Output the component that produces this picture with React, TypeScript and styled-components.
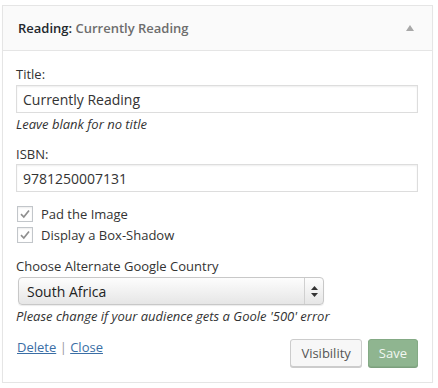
import React from "react";
import styled, { createGlobalStyle } from "styled-components";

const Global = createGlobalStyle`
  html, body { margin: 0; padding: 0; background: #fff; }
  body { font-family: "Open Sans", "Noto Sans", sans-serif; color: #444; font-size: 13px; }
  * { box-sizing: border-box; }
`;

const Widget = styled.div`
  margin: 5px 0 0 2px;
  width: 431px;
  border: 1px solid #e5e5e5;
  background: #fff;
  box-shadow: 0 1px 1px rgba(0, 0, 0, 0.04);
`;

const Header = styled.div`
  height: 45px;
  background: #fafafa;
  border-bottom: 1px solid #e5e5e5;
  padding: 0 18px 0 15px;
  display: flex;
  align-items: center;
  justify-content: space-between;
`;

const HeaderTitle = styled.div`
  font-size: 13px;
  font-weight: 600;
  color: #23282d;
`;

const HeaderSub = styled.span`
  color: #6d6d6d;
`;

const Toggle = styled.span`
  width: 0;
  height: 0;
  border-left: 4px solid transparent;
  border-right: 4px solid transparent;
  border-bottom: 6px solid #a8a8a8;
`;

const Body = styled.div`
  padding: 14px 14px 15px 13px;
  display: flex;
  flex-direction: column;
`;

const Label = styled.label<{ $gap?: number }>`
  display: block;
  line-height: 18px;
  font-size: 13px;
  color: #333;
  margin-top: ${(p) => p.$gap ?? 0}px;
`;

const TextInput = styled.div<{ $gap?: number }>`
  margin-top: ${(p) => p.$gap ?? 2}px;
  height: 28px;
  border: 1px solid #ddd;
  box-shadow: inset 0 1px 2px rgba(0, 0, 0, 0.07);
  padding: 0 6px;
  display: flex;
  align-items: center;
  font-size: 14px;
  color: #333;
`;

const Hint = styled.div<{ $gap?: number }>`
  margin-top: ${(p) => p.$gap ?? 2}px;
  line-height: 18px;
  font-size: 13px;
  font-style: italic;
  color: #333;
`;

const CheckList = styled.div`
  margin-top: 11px;
  display: flex;
  flex-direction: column;
`;

const CheckRow = styled.div`
  height: 21px;
  display: flex;
  align-items: center;
  gap: 8px;
  padding-left: 1px;
  font-size: 13px;
  color: #333;
`;

const Box = styled.span`
  width: 16px;
  height: 16px;
  border: 1px solid #c2c6ca;
  background: #fff;
  box-shadow: inset 0 1px 2px rgba(0, 0, 0, 0.08);
  display: flex;
  align-items: center;
  justify-content: center;
`;

const Select = styled.div`
  margin-top: 2px;
  margin-left: 2px;
  width: 306px;
  height: 28px;
  border: 1px solid #c8c8c8;
  border-radius: 4px;
  background: linear-gradient(#fdfdfd, #e6e6e6);
  box-shadow: 0 1px 1px rgba(0, 0, 0, 0.08);
  display: flex;
  align-items: stretch;
  font-size: 14px;
  color: #222;
`;

const SelectValue = styled.div`
  flex: 1;
  display: flex;
  align-items: center;
  padding-left: 8px;
`;

const SelectArrows = styled.div`
  width: 19px;
  border-left: 1px solid #d0d0d0;
  display: flex;
  align-items: center;
  justify-content: center;
`;

const Footer = styled.div`
  margin-top: 13px;
  display: flex;
  justify-content: space-between;
  align-items: flex-start;
`;

const Links = styled.div`
  line-height: 18px;
  font-size: 13px;
  color: #999;
  padding-left: 1px;
`;

const Link = styled.a`
  color: #3a6ea5;
  text-decoration: underline;
`;

const Buttons = styled.div`
  display: flex;
  gap: 6px;
  margin-top: 1px;
`;

const Button = styled.button<{ $primary?: boolean }>`
  height: 28px;
  padding: 0 10px;
  font-family: "Open Sans", "Noto Sans", sans-serif;
  font-size: 13px;
  border-radius: 3px;
  border: 1px solid ${(p) => (p.$primary ? "#84aa85" : "#cccccc")};
  background: ${(p) => (p.$primary ? "#8fb590" : "#f7f7f7")};
  color: ${(p) => (p.$primary ? "#f2f7f2" : "#555")};
  box-shadow: 0 1px 0 ${(p) => (p.$primary ? "#7c9f7d" : "#cccccc")};
`;

const Check = () => (
  <svg width="12" height="12" viewBox="0 0 12 12">
    <path d="M2 6.2 L4.8 9 L10 2.5" fill="none" stroke="#8f8f8f" strokeWidth="1.7" />
  </svg>
);

export default function App() {
  return (
    <>
      <Global />
      <Widget>
        <Header>
          <HeaderTitle>
            Reading: <HeaderSub>Currently Reading</HeaderSub>
          </HeaderTitle>
          <Toggle />
        </Header>
        <Body>
          <Label>Title:</Label>
          <TextInput>Currently Reading</TextInput>
          <Hint>Leave blank for no title</Hint>
          <Label $gap={12}>ISBN:</Label>
          <TextInput $gap={1}>9781250007131</TextInput>
          <CheckList>
            <CheckRow>
              <Box>
                <Check />
              </Box>
              Pad the Image
            </CheckRow>
            <CheckRow>
              <Box>
                <Check />
              </Box>
              Display a Box-Shadow
            </CheckRow>
          </CheckList>
          <Label $gap={12}>Choose Alternate Google Country</Label>
          <Select>
            <SelectValue>South Africa</SelectValue>
            <SelectArrows>
              <svg width="7" height="11" viewBox="0 0 7 11">
                <path d="M3.5 0 L7 4 L0 4 Z M3.5 11 L7 7 L0 7 Z" fill="#333" />
              </svg>
            </SelectArrows>
          </Select>
          <Hint>Please change if your audience gets a Goole '500' error</Hint>
          <Footer>
            <Links>
              <Link>Delete</Link> | <Link>Close</Link>
            </Links>
            <Buttons>
              <Button>Visibility</Button>
              <Button $primary>Save</Button>
            </Buttons>
          </Footer>
        </Body>
      </Widget>
    </>
  );
}
